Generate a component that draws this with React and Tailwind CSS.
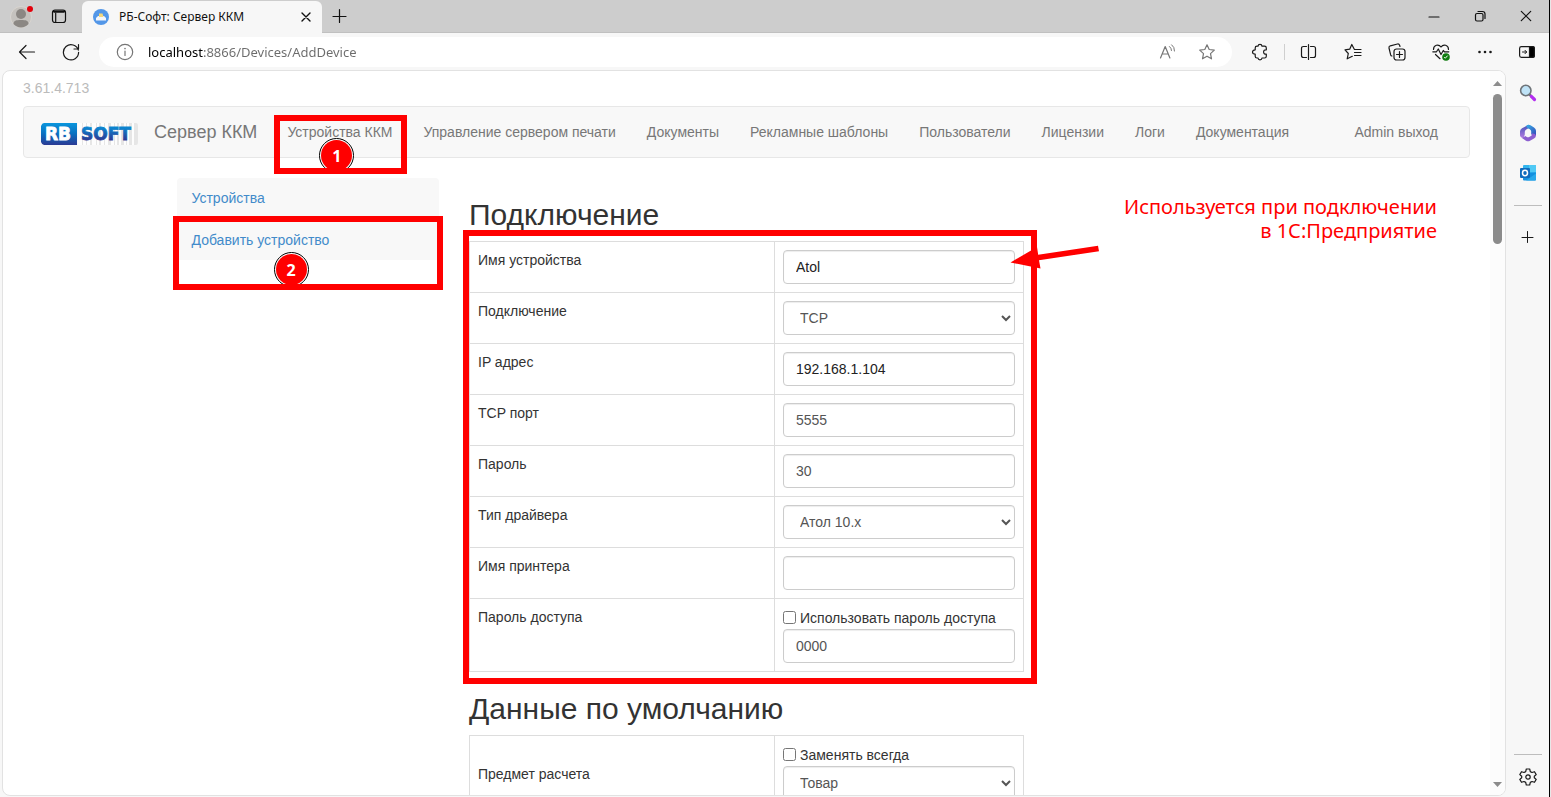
import React, { useId } from "react";

const NAV_ITEMS = [
  "Устройства ККМ",
  "Управление сервером печати",
  "Документы",
  "Рекламные шаблоны",
  "Пользователи",
  "Лицензии",
  "Логи",
  "Документация",
];

const CONNECTION_FIELDS = [
  { label: "Имя устройства", value: "Atol", dark: true },
  { label: "Подключение", value: "TCP", options: ["TCP", "USB", "COM"] },
  { label: "IP адрес", value: "192.168.1.104", dark: true },
  { label: "TCP порт", value: "5555" },
  { label: "Пароль", value: "30" },
  { label: "Тип драйвера", value: "Атол 10.x", options: ["Атол 10.x", "Атол 8.x"] },
  { label: "Имя принтера", value: "" },
  { label: "Пароль доступа", value: "0000", check: "Использовать пароль доступа" },
];

function Icon({ size = 18, className = "", children, stroke = "#1a1a1a" }) {
  return (
    <svg
      width={size}
      height={size}
      viewBox={`0 0 ${size} ${size}`}
      fill="none"
      stroke={stroke}
      strokeWidth="1.2"
      strokeLinecap="round"
      strokeLinejoin="round"
      className={`block shrink-0 ${className}`}
      aria-hidden="true"
    >
      {children}
    </svg>
  );
}

function IconButton({ label, className = "", children }) {
  return (
    <button type="button" aria-label={label} className={`flex items-center justify-center ${className}`}>
      {children}
    </button>
  );
}

function TabStrip() {
  return (
    <div className="flex h-[33px] shrink-0 items-stretch border-b border-[#c0c0c0] bg-[#cdcdcd] pl-[10px]">
      <IconButton label="Профиль" className="w-6">
        <svg width="24" height="24" viewBox="0 0 24 24" aria-hidden="true">
          <circle cx="11" cy="13" r="10.5" fill="#c5c2be" stroke="#d9d5d0" />
          <circle cx="11" cy="10" r="5" fill="#8b8783" />
          <path d="M3.500 20 C3.500 16.500 6 16 11 16 C16 16 18.500 16.500 18.500 20 C16.500 22.300 14 23.500 11 23.500 C8 23.500 5.500 22.300 3.500 20 Z" fill="#8b8783" />
          <circle cx="20" cy="5" r="3" fill="#e3000b" />
        </svg>
      </IconButton>
      <IconButton label="Действия со вкладками" className="ml-4 w-[18px]">
        <Icon size={16} stroke="#111">
          <rect x="1.500" y="2" width="13" height="12.500" rx="2.500" />
          <path d="M3 3.600 H13" strokeWidth="2.200" />
          <path d="M4.700 5 V14" />
        </Icon>
      </IconButton>
      <div className="-mb-px ml-[14px] mt-px flex w-[240px] items-center rounded-t-[6px] bg-[#f7f7f7] pl-[11px] pr-[10px]">
        <svg width="16" height="16" viewBox="0 0 16 16" aria-hidden="true" className="shrink-0">
          <circle cx="8" cy="8" r="8" fill="#5397e8" />
          <path d="M3 11.500 V9 L5 7 H11 L13 9 V11.500 Z" fill="#f4f6fa" />
          <path d="M6 8 V4.500 H9.500 L10.500 8 Z" fill="#f5d77c" />
        </svg>
        <span className="ml-[10px] flex-1 whitespace-nowrap font-['Noto_Sans',sans-serif] text-[12px] leading-4 text-[#111]">
          РБ-Софт: Сервер ККМ
        </span>
        <IconButton label="Закрыть вкладку" className="size-3">
          <Icon size={12} stroke="#111">
            <path d="M2 2 L10 10 M10 2 L2 10" strokeWidth="1.400" />
          </Icon>
        </IconButton>
      </div>
      <IconButton label="Новая вкладка" className="ml-[10px] w-4">
        <Icon size={16} stroke="#111">
          <path d="M7.500 1.500 V14.500 M1 8.500 H14" />
        </Icon>
      </IconButton>
      <div className="ml-auto flex">
        <IconButton label="Свернуть" className="w-[46px]">
          <Icon size={12} stroke="#111">
            <path d="M1 7 H11" strokeWidth="1.200" />
          </Icon>
        </IconButton>
        <IconButton label="Восстановить" className="w-[46px]">
          <Icon size={12} stroke="#111">
            <rect x="1.500" y="3.500" width="7.500" height="7.500" rx="1.500" />
            <path d="M4 1.500 H8.500 Q11 1.500 11 4 V8.500" />
          </Icon>
        </IconButton>
        <IconButton label="Закрыть" className="w-[46px]">
          <Icon size={12} stroke="#111">
            <path d="M1.300 1.300 L10.700 10.700 M10.700 1.300 L1.300 10.700" />
          </Icon>
        </IconButton>
      </div>
    </div>
  );
}

const STAR = "M9 1.800 L11.200 6.500 L16.300 7.100 L12.500 10.600 L13.500 15.800 L9 13.200 L4.500 15.800 L5.500 10.600 L1.700 7.100 L6.800 6.500 Z";

function Toolbar() {
  return (
    <div className="flex h-[37px] shrink-0 items-center pl-[18px] pr-[13px] pt-px">
      <IconButton label="Назад" className="size-[18px]">
        <Icon>
          <path d="M1.500 9 H16.500 M8 2.500 L1.500 9 L8 15.500" />
        </Icon>
      </IconButton>
      <IconButton label="Обновить" className="ml-[26px] size-[18px]">
        <Icon>
          <path d="M16.300 7.200 A7.600 7.600 0 1 0 16.600 9.300 M16.500 1.600 V6 H12" />
        </Icon>
      </IconButton>
      <div className="ml-[19px] flex h-[30px] flex-1 items-center rounded-full bg-white pl-[17px] pr-4">
        <Icon stroke="#767676">
          <circle cx="9" cy="9" r="7.700" />
          <path d="M9 8 V12.500" />
          <path d="M9 5.500 V5.600" strokeWidth="1.600" />
        </Icon>
        <input
          type="text"
          aria-label="Адрес"
          defaultValue="localhost:8866/Devices/AddDevice"
          className="ml-[14px] h-5 min-w-0 flex-1 bg-[linear-gradient(90deg,#000_55px,#6b6b6b_55px)] bg-clip-text font-['Noto_Sans',sans-serif] text-[13px] leading-5 text-transparent outline-none"
        />
        <IconButton label="Прочесть вслух" className="size-[18px]">
          <Icon stroke="#767676">
            <path d="M2.500 15 L7.200 3.500 L11.900 15 M4.100 11 H10.300" />
            <path d="M11.500 3.500 Q13.500 5 13.500 7.500 M13.700 1.800 Q16.700 4 16.500 8" strokeWidth="1" />
          </Icon>
        </IconButton>
        <IconButton label="В избранное" className="ml-[22px] size-[18px]">
          <Icon stroke="#767676">
            <path d={STAR} />
          </Icon>
        </IconButton>
      </div>
      <IconButton label="Расширения" className="ml-[19px] size-[18px]">
        <Icon>
          <path d="M4.200 5 Q4.200 3.200 6 3.200 H7 Q7.200 1.300 9 1.300 Q10.800 1.300 11 3.200 H13.500 Q15.300 3.200 15.300 5 V6.800 Q12.600 6.600 12.600 9 Q12.600 11.400 15.300 11.200 V13.200 Q15.300 15 13.500 15 H11 Q10.800 16.800 9 16.800 Q7.200 16.800 7 15 H6 Q4.200 15 4.200 13.200 V11.200 Q1.500 11.200 1.500 9 Q1.500 6.800 4.200 6.800 Z" />
        </Icon>
      </IconButton>
      <div className="ml-[15px] h-4 w-px bg-[#cfcfcf]" />
      <IconButton label="Разделить экран" className="ml-[15px] size-[18px]">
        <Icon>
          <path d="M6.500 3.500 H3.500 Q1.500 3.500 1.500 5.500 V12.500 Q1.500 14.500 3.500 14.500 H6.500 M10.500 3.500 H13.500 Q15.500 3.500 15.500 5.500 V12.500 Q15.500 14.500 13.500 14.500 H10.500 M8.500 1.500 V16.500" />
        </Icon>
      </IconButton>
      <IconButton label="Избранное" className="ml-[26px] size-[18px]">
        <Icon>
          <path d="M10.300 6.200 L7.800 1.500 L5.700 6.200 L1 6.900 L4.300 10.500 L3.200 15.800 L8.300 13.300 M10.500 6.500 H17 M10.500 9.500 H17 M10.500 12.500 H17" />
        </Icon>
      </IconButton>
      <IconButton label="Коллекции" className="ml-[26px] size-[18px]">
        <Icon>
          <rect x="6" y="6" width="11" height="11" rx="2.500" />
          <path d="M11.500 8.500 V14.500 M8.500 11.500 H14.500 M3.900 13 Q3 12.800 2.600 11.700 L1 5 Q0.700 3.300 2.300 2.800 L9.500 1 Q11 0.700 11.600 2.200 L12 3.500" />
        </Icon>
      </IconButton>
      <IconButton label="Производительность" className="ml-[26px] size-[18px]">
        <Icon>
          <path d="M1.500 6.500 C1.500 2 6.500 0.500 9 4 C11.500 0.500 16.500 2 16.500 6.500 M0.800 8.800 H4.500 L6.300 6 L9 11.500 L11.300 7.500 L12.500 8.800 H16.800 M3.500 11.500 L8 15.700" />
          <circle cx="14" cy="14" r="3.800" fill="#107c10" stroke="none" />
          <path d="M12.500 14.500 L13.300 15.200 L15.400 12.900" stroke="#fff" strokeWidth="1" />
        </Icon>
      </IconButton>
      <IconButton label="Ещё" className="ml-[26px] size-[18px]">
        <Icon stroke="none">
          <g fill="#1a1a1a">
            <circle cx="3.500" cy="9" r="1.300" />
            <circle cx="9" cy="9" r="1.300" />
            <circle cx="14.500" cy="9" r="1.300" />
          </g>
        </Icon>
      </IconButton>
      <IconButton label="Боковая панель" className="ml-6 size-[18px]">
        <Icon>
          <rect x="1.600" y="3.600" width="14.800" height="10.800" rx="1.800" />
          <path d="M11.500 3.600 H14.500 Q16.400 3.600 16.400 5.500 V12.500 Q16.400 14.400 14.500 14.400 H11.500 Z" fill="#000" />
          <path d="M4.500 9 H8.500 M7 7.300 L8.700 9 L7 10.700" strokeWidth="1" />
        </Icon>
      </IconButton>
    </div>
  );
}

function EdgeSidebar() {
  return (
    <aside className="flex w-[43px] shrink-0 flex-col items-center pb-[11px] pt-[14px]">
      <IconButton label="Поиск" className="size-[18px]">
        <svg width="18" height="18" viewBox="0 0 18 18" aria-hidden="true">
          <path d="M10 10 L13 13" stroke="#5b5b5b" strokeWidth="2" />
          <path d="M12.300 12.300 L15.500 15.500" stroke="#b32df0" strokeWidth="3.200" strokeLinecap="round" />
          <circle cx="6.800" cy="6.500" r="5.200" fill="#bfe3f7" stroke="#6f7479" strokeWidth="1.600" />
        </svg>
      </IconButton>
      <IconButton label="Microsoft 365" className="mt-[22px] size-[18px]">
        <svg width="18" height="18" viewBox="0 0 18 18" aria-hidden="true">
          <defs>
            <linearGradient id="m365a" x1="0" y1="0" x2="1" y2="1">
              <stop offset="0" stopColor="#35b0e8" />
              <stop offset="1" stopColor="#3548b8" />
            </linearGradient>
            <linearGradient id="m365b" x1="0" y1="0" x2="0" y2="1">
              <stop offset="0" stopColor="#4453b8" />
              <stop offset="1" stopColor="#b07be0" />
            </linearGradient>
          </defs>
          <path d="M9.500 0.800 L3 4.300 Q1 5.500 1 7.500 V11.500 Q1.300 13.500 3.200 13.600 Q5.600 13.200 5.800 10.500 V7.800 Q5.900 6.200 7.300 5.400 L9.800 4 Z" fill="url(#m365b)" />
          <path d="M7.500 1.400 Q9.500 0.200 11.500 1.300 L15 3.400 Q17 4.700 17 6.700 V11.300 Q14.500 12.200 12.200 10.200 V7.500 Q12.100 6 10.800 5.200 L8.800 4.300 Q6.800 2.700 7.500 1.400 Z" fill="url(#m365a)" />
          <path d="M2.200 13.400 Q5 13.700 6.300 12 L7.800 12.900 Q9 13.500 10.200 12.900 L12.300 11.700 Q13.500 10.700 12.300 9.500 Q16.500 9 17 11.300 Q17 13.500 15 14.500 L11 16.800 Q9 17.800 7 16.800 Z" fill="#8c5fd0" />
        </svg>
      </IconButton>
      <IconButton label="Outlook" className="mt-[22px] size-[18px]">
        <svg width="18" height="18" viewBox="0 0 18 18" aria-hidden="true">
          <rect x="4" y="1" width="13" height="14" rx="1" fill="#33b5ee" />
          <path d="M10 1 H16 Q17 1 17 2 V8 H10 Z" fill="#50c9f5" />
          <path d="M4 9 L17 8.500 V15.500 Q17 16.500 16 16.500 H5 Q4 16.500 4 15.500 Z" fill="#1490df" />
          <path d="M7 16.500 L17 9.500 V15.500 Q17 16.500 16 16.500 Z" fill="#28a8ea" />
          <rect x="1" y="4" width="10" height="10" rx="1" fill="#0f6cbd" />
          <ellipse cx="6" cy="9" rx="2.500" ry="2.700" fill="none" stroke="#fff" strokeWidth="1.500" />
        </svg>
      </IconButton>
      <div className="mt-[23px] h-px w-7 bg-[#bdbdbd]" />
      <IconButton label="Настроить" className="mt-[22px] size-[18px]">
        <Icon>
          <path d="M8.500 3.500 V14.500 M3 9.500 H14" strokeWidth="1" />
        </Icon>
      </IconButton>
      <div className="mt-auto h-px w-7 bg-[#bdbdbd]" />
      <IconButton label="Параметры" className="mt-[13px] size-[18px]">
        <Icon>
          <path d="M7.300 1 H10.700 L11.300 3.600 L13 4.500 L15.500 3.700 L17.200 6.600 L15.300 8.300 V9.700 L17.200 11.400 L15.500 14.300 L13 13.500 L11.300 14.400 L10.700 17 H7.300 L6.700 14.400 L5 13.500 L2.500 14.300 L0.800 11.400 L2.700 9.700 V8.300 L0.800 6.600 L2.500 3.700 L5 4.500 L6.700 3.600 Z" />
          <circle cx="9" cy="9" r="2.200" />
        </Icon>
      </IconButton>
    </aside>
  );
}

function Logo() {
  return (
    <svg width="98" height="24" viewBox="0 0 98 24" role="img" aria-label="RB SOFT" className="block shrink-0">
      <defs>
        <linearGradient id="rbBox" x1="0" y1="0" x2="0" y2="1">
          <stop offset="0" stopColor="#0a96dd" />
          <stop offset="0.5" stopColor="#0a6fbf" />
          <stop offset="1" stopColor="#2b3a94" />
        </linearGradient>
        <linearGradient id="softText" x1="0" y1="0" x2="0" y2="1">
          <stop offset="0.200" stopColor="#0b84cf" />
          <stop offset="0.800" stopColor="#2b3a94" />
        </linearGradient>
      </defs>
      <rect x="37" y="1" width="59" height="22" fill="#fdfdfd" />
      <g fill="#e6e6e6">
        <rect x="41" y="1" width="1" height="22" />
        <rect x="45" y="1" width="1" height="22" />
        <rect x="49" y="1" width="2" height="22" />
        <rect x="55" y="1" width="1" height="22" />
        <rect x="58" y="1" width="2" height="22" />
        <rect x="63" y="1" width="1" height="22" />
        <rect x="67" y="1" width="3" height="22" />
        <rect x="73" y="1" width="1" height="22" />
        <rect x="76" y="1" width="2" height="22" />
        <rect x="80" y="1" width="3" height="22" />
        <rect x="85" y="1" width="1" height="22" />
        <rect x="88" y="1" width="3" height="22" />
        <path d="M93 1 H95 Q97 1 97 4 V20 Q97 23 95 23 H93 Z" />
      </g>
      <path d="M3 1 H36 V23 H3 Q1 23 0 20 V4 Q1 1 3 1 Z" fill="url(#rbBox)" />
      <g fontFamily="'DejaVu Sans', sans-serif" fontWeight="700" fontSize="17">
        <text x="4" y="18" fill="#fff" stroke="#fff" strokeWidth="0.800">RB</text>
        <text x="40" y="18" fill="url(#softText)" stroke="url(#softText)" strokeWidth="0.800">SOFT</text>
      </g>
    </svg>
  );
}

function StepMark({ number, className = "" }) {
  return (
    <span
      className={`absolute flex size-[35px] items-center justify-center rounded-full border border-black bg-white p-px ${className}`}
    >
      <span className="flex size-full items-center justify-center rounded-full bg-[#ff0000] font-['Open_Sans',sans-serif] text-[16px] font-bold leading-none text-white">
        {number}
      </span>
    </span>
  );
}

function Navbar() {
  return (
    <nav className="flex h-[52px] items-center rounded-[4px] border border-[#e7e7e7] bg-[#f8f8f8] pl-[17px] pr-[31px] text-[#777]">
      <a href="#home" className="mt-1 block">
        <Logo />
      </a>
      <a href="#home" className="ml-[15px] whitespace-nowrap text-[18px] leading-5">
        Сервер ККМ
      </a>
      <ul className="ml-[15px] flex gap-px">
        {NAV_ITEMS.map((item, i) => (
          <li key={item} className="relative">
            <a href="#nav" className="block whitespace-nowrap px-[15px] py-[15px] leading-5">
              {item}
            </a>
            {i === 0 && (
              <span className="pointer-events-none absolute left-[2px] right-0 top-2 h-[59px] overflow-hidden border-[6px] border-[#ff0000]">
                <StepMark number="1" className="left-[39px] top-[17px]" />
              </span>
            )}
          </li>
        ))}
      </ul>
      <a href="#logout" className="ml-auto whitespace-nowrap leading-5">
        Admin выход
      </a>
    </nav>
  );
}

function SideMenu() {
  return (
    <ul className="flex flex-col gap-[2px] text-[#428bca]">
      <li>
        <a href="#devices" className="block rounded-t-[4px] bg-[#f8f8f8] px-[15px] py-[10px] leading-5">
          Устройства
        </a>
      </li>
      <li className="relative">
        <a href="#add" className="block bg-[#f8f8f8] px-[15px] py-[10px] leading-5">
          Добавить устройство
        </a>
        <span className="pointer-events-none absolute -left-1 -right-1 -top-1 h-[74px] overflow-hidden border-[6px] border-[#ff0000]">
          <StepMark number="2" className="left-[95px] top-[30px]" />
        </span>
      </li>
    </ul>
  );
}

function Field({ field, middle }) {
  const id = useId();
  const control =
    "block h-[34px] w-full rounded-[4px] border border-[#ccc] bg-white px-3 shadow-[inset_0_1px_1px_rgba(0,0,0,0.075)]";
  return (
    <tr className={middle ? "align-middle" : "align-top"}>
      <td className={`border border-[#ddd] p-2 leading-5 ${middle ? "h-[77px]" : ""}`}>
        <label htmlFor={id}>{field.label}</label>
      </td>
      <td className="w-[249px] border border-[#ddd] p-2 align-top">
        {field.check && (
          <label className="flex h-[22px] items-center gap-1 whitespace-nowrap leading-5">
            <input type="checkbox" className="mb-[2px] size-[13px]" />
            {field.check}
          </label>
        )}
        {field.options ? (
          <select id={id} defaultValue={field.value} className={`${control} text-[#555]`}>
            {field.options.map((o) => (
              <option key={o}>{o}</option>
            ))}
          </select>
        ) : (
          <input
            id={id}
            type="text"
            defaultValue={field.value}
            className={`${control} ${field.dark ? "text-[#222]" : "text-[#555]"}`}
          />
        )}
      </td>
    </tr>
  );
}

function DeviceForm() {
  return (
    <form className="w-[555px]">
      <h2 className="mb-[10px] mt-5 text-[30px] font-medium leading-[33px]">Подключение</h2>
      <div className="relative">
        <table className="w-full border-collapse">
          <tbody>
            {CONNECTION_FIELDS.map((f) => (
              <Field key={f.label} field={f} />
            ))}
          </tbody>
        </table>
        <span className="pointer-events-none absolute -bottom-3 -left-[6px] -right-[13px] -top-[11px] border-[6px] border-[#ff0000]" />
        <svg
          width="90"
          height="26"
          viewBox="0 0 90 26"
          aria-hidden="true"
          className="pointer-events-none absolute left-[541px] top-1"
        >
          <path d="M0.500 17.500 L27 2 L28.200 9.800 L88 0.800 L89 6.200 L29 15.300 L30.500 23.500 Z" fill="#ff0000" />
        </svg>
        <p className="pointer-events-none absolute -top-[46px] left-[638px] w-[330px] whitespace-nowrap text-right font-['Noto_Sans',sans-serif] text-[20px] leading-6 text-[#ff0000]">
          Используется при подключении
          <br />в 1С:Предприятие
        </p>
      </div>
      <h2 className="mb-[10px] mt-5 text-[30px] font-medium leading-[33px]">Данные по умолчанию</h2>
      <table className="w-full border-collapse">
        <tbody>
          <Field
            middle
            field={{ label: "Предмет расчета", value: "Товар", options: ["Товар", "Услуга"], check: "Заменять всегда" }}
          />
        </tbody>
      </table>
    </form>
  );
}

function Scrollbar() {
  return (
    <div className="flex w-[15px] shrink-0 flex-col items-center bg-[#fcfcfc] pb-2 pt-[10px]" aria-hidden="true">
      <svg width="9" height="5" viewBox="0 0 9 5">
        <path d="M0 5 L4.500 0 L9 5 Z" fill="#8b8b8b" />
      </svg>
      <div className="mt-2 h-[150px] w-[9px] rounded-full bg-[#8b8b8b]" />
      <svg width="9" height="5" viewBox="0 0 9 5" className="mt-auto">
        <path d="M0 0 L4.500 5 L9 0 Z" fill="#8b8b8b" />
      </svg>
    </div>
  );
}

export default function App() {
  return (
    <div className="h-screen overflow-hidden bg-[#e8e8e8] pr-px">
      <div className="flex h-full flex-col border-r border-black bg-[#f7f7f7]">
        <TabStrip />
        <Toolbar />
        <div className="flex min-h-0 flex-1">
          <div className="mb-px ml-[2px] flex min-w-0 flex-1 overflow-hidden rounded-[8px] border border-[#e2e2e2] bg-white">
            <main className="min-w-0 flex-1 overflow-hidden px-5 pt-[7px] font-['Liberation_Sans',Arial,sans-serif] text-[14px] text-[#333]">
              <p className="mb-2 leading-5 text-[#bbb]">3.61.4.713</p>
              <Navbar />
              <div className="mx-auto mt-5 flex max-w-[1170px]">
                <div className="w-1/4 px-[15px]">
                  <SideMenu />
                </div>
                <div className="w-3/4 px-[15px]">
                  <DeviceForm />
                </div>
              </div>
            </main>
            <Scrollbar />
          </div>
          <EdgeSidebar />
        </div>
      </div>
    </div>
  );
}
